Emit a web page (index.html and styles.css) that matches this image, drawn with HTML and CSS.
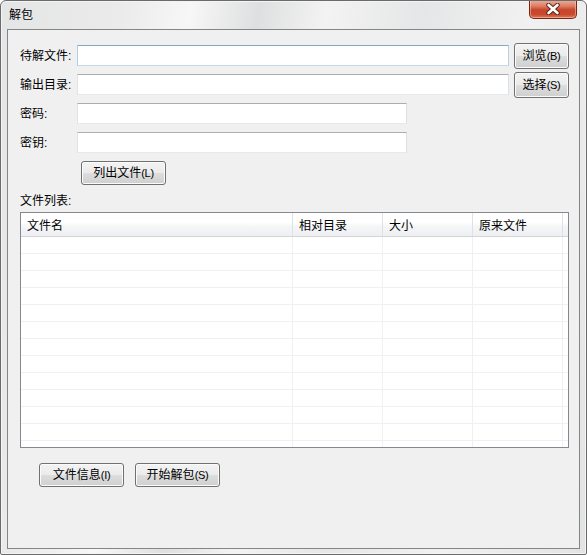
FILE: index.html
```html
<!DOCTYPE html>
<html lang="zh-CN">
<head>
<meta charset="utf-8">
<title>解包</title>
<link rel="stylesheet" href="styles.css">
</head>
<body>
<div class="window">
  <div class="titlebar">
    <span class="title">解包</span>
    <div class="close">
      <svg width="14" height="12" viewBox="0 0 14 12">
        <path d="M2.5 2 L11.5 10 M11.5 2 L2.5 10" stroke="#5a2418" stroke-width="4.4" stroke-linecap="round"/>
        <path d="M2.5 2 L11.5 10 M11.5 2 L2.5 10" stroke="#ffffff" stroke-width="2.6" stroke-linecap="round"/>
      </svg>
    </div>
  </div>
  <div class="client">
    <div class="row">
      <span class="lbl">待解文件:</span>
      <input class="field wide focus" type="text">
      <button class="btn side">浏览<span class="key">(B)</span></button>
    </div>
    <div class="row">
      <span class="lbl">输出目录:</span>
      <input class="field wide" type="text">
      <button class="btn side">选择<span class="key">(S)</span></button>
    </div>
    <div class="row">
      <span class="lbl">密码:</span>
      <input class="field short" type="text">
    </div>
    <div class="row">
      <span class="lbl">密钥:</span>
      <input class="field short" type="text">
    </div>
    <button class="btn act list-btn">列出文件<span class="key">(L)</span></button>
    <div class="section">文件列表:</div>
    <div class="listview">
      <div class="lv-head">
        <div class="hc">文件名</div>
        <div class="hc">相对目录</div>
        <div class="hc">大小</div>
        <div class="hc">原来文件</div>
        <div class="hc last"></div>
      </div>
      <div class="lv-body">
        <div class="lv-row"><div></div><div></div><div></div><div></div><div></div></div>
        <div class="lv-row"><div></div><div></div><div></div><div></div><div></div></div>
        <div class="lv-row"><div></div><div></div><div></div><div></div><div></div></div>
        <div class="lv-row"><div></div><div></div><div></div><div></div><div></div></div>
        <div class="lv-row"><div></div><div></div><div></div><div></div><div></div></div>
        <div class="lv-row"><div></div><div></div><div></div><div></div><div></div></div>
        <div class="lv-row"><div></div><div></div><div></div><div></div><div></div></div>
        <div class="lv-row"><div></div><div></div><div></div><div></div><div></div></div>
        <div class="lv-row"><div></div><div></div><div></div><div></div><div></div></div>
        <div class="lv-row"><div></div><div></div><div></div><div></div><div></div></div>
        <div class="lv-row"><div></div><div></div><div></div><div></div><div></div></div>
        <div class="lv-row"><div></div><div></div><div></div><div></div><div></div></div>
        <div class="lv-row"><div></div><div></div><div></div><div></div><div></div></div>
      </div>
    </div>
    <div class="actions">
      <button class="btn act">文件信息<span class="key">(I)</span></button>
      <button class="btn act">开始解包<span class="key">(S)</span></button>
    </div>
  </div>
</div>
</body>
</html>
```
FILE: styles.css
```css
html, body {
  margin: 0;
  padding: 0;
  background: #ffffff;
}
body {
  font-family: "Liberation Sans", "Noto Sans CJK SC", sans-serif;
  font-size: 12px;
  color: #000;
}
.window {
  width: 587px;
  height: 555px;
  box-sizing: border-box;
  border: 1px solid #6b6b6b;
  border-radius: 6px 6px 2px 2px;
  padding: 0 6px 5px 6px;
  background: linear-gradient(100deg, #e4e5e6 0%, #ebebeb 18%, #f7f7f7 28%, #dedfe0 38%, #f3f3f3 48%, #e5e6e7 62%, #f1f1f1 78%, #e2e3e4 100%);
  box-shadow: inset 0 0 0 1px #f4f4f4;
  display: flex;
  flex-direction: column;
  overflow: hidden;
}
.titlebar {
  height: 28px;
  display: flex;
  align-items: flex-start;
  margin: 0 -1px 0 -6px;
}
.title {
  padding: 5px 0 0 8px;
  line-height: 18px;
  font-size: 12px;
}
.close {
  margin-left: auto;
  margin-right: 4px;
  margin-top: -1px;
  width: 46px;
  height: 18px;
  border: 1px solid #7a2516;
  border-top: none;
  border-radius: 0 0 5px 5px;
  background: linear-gradient(#eab0a2 0%, #dc7c62 35%, #c8442a 55%, #c94a2e 80%, #dc7a5c 100%);
  box-shadow: inset 0 0 0 1px rgba(255, 220, 200, 0.45);
  display: flex;
  align-items: center;
  justify-content: center;
}
.client {
  flex: 1;
  background: #f0f0f0;
  border: 1px solid #858585;
  padding: 11px 10px 0 12px;
  display: flex;
  flex-direction: column;
  align-items: flex-start;
}
.row {
  height: 29px;
  display: flex;
  align-items: center;
  width: 100%;
}
.lbl {
  width: 57px;
  flex: none;
  line-height: 16px;
  white-space: nowrap;
}
.field {
  -webkit-appearance: none;
  appearance: none;
  box-sizing: border-box;
  height: 21px;
  margin: 0;
  padding: 0;
  background: #ffffff;
  border: 1px solid;
  border-color: #abadb3 #dbdfe6 #e3e9ef #e2e3ea;
  border-radius: 0;
  outline: none;
}
.field.wide { width: 432px; }
.field.short { width: 330px; }
.field.focus {
  border-color: #84a8cc #b7d0e6 #c3d9ec #b5cde4;
}
.btn {
  -webkit-appearance: none;
  appearance: none;
  box-sizing: border-box;
  margin: 0;
  padding: 0;
  font-family: "Liberation Sans", "Noto Sans CJK SC", sans-serif;
  font-size: 12px;
  line-height: 16px;
  color: #000;
  border: 1px solid #707070;
  border-radius: 3px;
  background: linear-gradient(#f3f3f3 0%, #ebebeb 48%, #dddddd 52%, #cfcfcf 100%);
  box-shadow: inset 0 0 0 1px #fbfbfb;
  display: flex;
  align-items: center;
  justify-content: center;
}
.key {
  font-size: 11px;
  letter-spacing: -0.3px;
}
.btn.side {
  width: 55px;
  height: 26px;
  margin-left: 5px;
}
.btn.act {
  width: 85px;
  height: 24px;
}
.list-btn {
  margin-top: 4px;
  margin-left: 61px;
}
.section {
  margin-top: 8px;
  margin-bottom: 3px;
  line-height: 16px;
}
.listview {
  box-sizing: border-box;
  width: 549px;
  height: 236px;
  border: 1px solid #828790;
  background: #ffffff;
  overflow: hidden;
}
.lv-head {
  display: grid;
  grid-template-columns: 272px 90px 90px 90px 1fr;
  height: 24px;
  box-sizing: border-box;
  border-bottom: 1px solid #d5d5d5;
  background: linear-gradient(#ffffff 0%, #ffffff 40%, #f4f5f7 60%, #eef0f3 100%);
}
.hc {
  border-right: 1px solid #dfe1e5;
  padding: 3px 0 0 6px;
  line-height: 20px;
  white-space: nowrap;
}
.hc.last {
  border-right: none;
}
.lv-body {
  height: 210px;
  overflow: hidden;
}
.lv-row {
  display: grid;
  grid-template-columns: 272px 90px 90px 90px 1fr;
  height: 17px;
  box-sizing: border-box;
  border-bottom: 1px solid #f0f0f0;
}
.lv-row > div {
  border-right: 1px solid #f0f0f0;
}
.lv-row > div:last-child {
  border-right: none;
}
.actions {
  display: flex;
  gap: 11px;
  margin-top: 15px;
  margin-left: 19px;
}
```
